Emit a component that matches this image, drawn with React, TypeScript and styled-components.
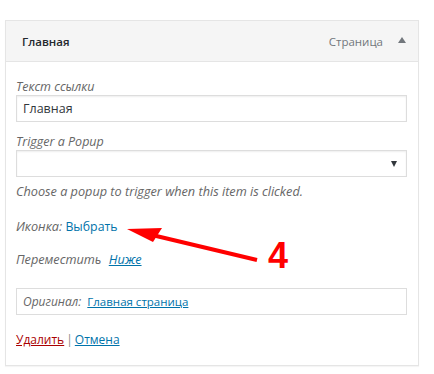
import styled, { createGlobalStyle } from "styled-components"

const GlobalStyle = createGlobalStyle`
    html, body {
        margin: 0;
        padding: 0;
        background: #fff;
    }
    body {
        font-family: "Open Sans", "Noto Sans", sans-serif;
        font-size: 12px;
        color: #23282d;
    }
`

const PageStyled = styled.div`
    position: relative;
    width: 434px;
    height: 374px;
    padding: 20px 0 0 5px;
    box-sizing: border-box;
`

const PanelStyled = styled.div`
    width: 414px;
    box-sizing: border-box;
    border: 1px solid #e5e5e5;
    box-shadow: 0 1px 1px rgba(0, 0, 0, 0.04);
    background: #fff;
`

const HeaderStyled = styled.div`
    display: flex;
    align-items: center;
    height: 40px;
    padding: 0 12px 0 16px;
    background: #f5f5f5;
    border-bottom: 1px solid #e5e5e5;
`

const TitleStyled = styled.div`
    flex: 1;
    font-weight: 600;
    font-size: 11.5px;
    color: #23282d;
`

const TypeStyled = styled.div`
    font-size: 11.5px;
    color: #72777c;
    margin-right: 15px;
`

const ToggleArrow = styled.span`
    width: 0;
    height: 0;
    border-left: 4px solid transparent;
    border-right: 4px solid transparent;
    border-bottom: 6px solid #72777c;
    margin-top: -2px;
`

const BodyStyled = styled.div`
    padding: 16px 11px 16px 10px;
`

const FieldStyled = styled.div<{ $gap?: number }>`
    display: flex;
    flex-direction: column;
    margin-top: ${({ $gap }) => $gap ?? 0}px;
`

const LabelStyled = styled.label`
    font-style: italic;
    font-size: 12.5px;
    line-height: 17px;
    color: #666;
`

const InputStyled = styled.div`
    display: flex;
    align-items: center;
    height: 27px;
    box-sizing: border-box;
    padding: 0 6px;
    border: 1px solid #ddd;
    box-shadow: inset 0 1px 2px rgba(0, 0, 0, 0.07);
    font-size: 12.5px;
    color: #32373c;
`

const SelectStyled = styled(InputStyled)`
    justify-content: flex-end;
    padding-right: 9px;
`

const SelectArrow = styled.span`
    width: 0;
    height: 0;
    border-left: 3.5px solid transparent;
    border-right: 3.5px solid transparent;
    border-top: 6px solid #32373c;
`

const DescriptionStyled = styled.div<{ $gap: number }>`
    margin-top: ${({ $gap }) => $gap}px;
    font-style: italic;
    font-size: 12.7px;
    line-height: 18px;
    color: #666;
`

const LinkStyled = styled.a<{ $underline?: boolean; $danger?: boolean; $size?: number }>`
    color: ${({ $danger }) => ($danger ? "#a00" : "#0073aa")};
    text-decoration: ${({ $underline }) => ($underline ? "underline" : "none")};
    font-style: normal;
    font-size: ${({ $size }) => $size ?? 12}px;
    cursor: pointer;
`

const ItalicLinkStyled = styled(LinkStyled)`
    font-style: italic;
    font-size: 12.7px;
    margin-left: 4px;
`

const OriginalStyled = styled.div`
    display: flex;
    align-items: center;
    gap: 6px;
    margin-top: 20px;
    height: 27px;
    box-sizing: border-box;
    padding: 0 6px;
    border: 1px solid #ddd;
    font-size: 12px;
`

const OriginalLabel = styled.span`
    font-style: italic;
    color: #666;
`

const ActionsStyled = styled.div`
    margin-top: 16px;
    font-size: 12px;
    line-height: 18px;

    & > span {
        margin: 0 2px;
        color: #888;
    }
`

const AnnotationArrow = styled.svg`
    position: absolute;
    left: 0;
    top: 0;
    pointer-events: none;
`

const AnnotationNumber = styled.div`
    position: absolute;
    left: 268px;
    top: 236px;
    font-family: "Liberation Sans", Arial, sans-serif;
    font-weight: 700;
    font-size: 36px;
    line-height: 40px;
    color: #f00;
`

export default function App() {
    return (
        <>
            <GlobalStyle />
            <PageStyled>
                <PanelStyled>
                    <HeaderStyled>
                        <TitleStyled>Главная</TitleStyled>
                        <TypeStyled>Страница</TypeStyled>
                        <ToggleArrow />
                    </HeaderStyled>
                    <BodyStyled>
                        <FieldStyled>
                            <LabelStyled>Текст ссылки</LabelStyled>
                            <InputStyled>Главная</InputStyled>
                        </FieldStyled>
                        <FieldStyled $gap={11}>
                            <LabelStyled>Trigger a Popup</LabelStyled>
                            <SelectStyled>
                                <SelectArrow />
                            </SelectStyled>
                        </FieldStyled>
                        <DescriptionStyled $gap={5}>
                            Choose a popup to trigger when this item is clicked.
                        </DescriptionStyled>
                        <DescriptionStyled $gap={17}>
                            Иконка: <LinkStyled $size={12.3}>Выбрать</LinkStyled>
                        </DescriptionStyled>
                        <DescriptionStyled $gap={14}>
                            Переместить <ItalicLinkStyled $underline>Ниже</ItalicLinkStyled>
                        </DescriptionStyled>
                        <OriginalStyled>
                            <OriginalLabel>Оригинал:</OriginalLabel>
                            <LinkStyled $underline $size={11.5}>Главная страница</LinkStyled>
                        </OriginalStyled>
                        <ActionsStyled>
                            <LinkStyled $underline $danger>Удалить</LinkStyled>
                            <span>|</span>
                            <LinkStyled $underline>Отмена</LinkStyled>
                        </ActionsStyled>
                    </BodyStyled>
                </PanelStyled>
                <AnnotationArrow width="434" height="374" viewBox="0 0 434 374">
                    <line x1="150" y1="234.5" x2="257" y2="260" stroke="#f00" strokeWidth="4" />
                    <polygon points="127,229 162,228 153,242" fill="#f00" />
                </AnnotationArrow>
                <AnnotationNumber>4</AnnotationNumber>
            </PageStyled>
        </>
    )
}
